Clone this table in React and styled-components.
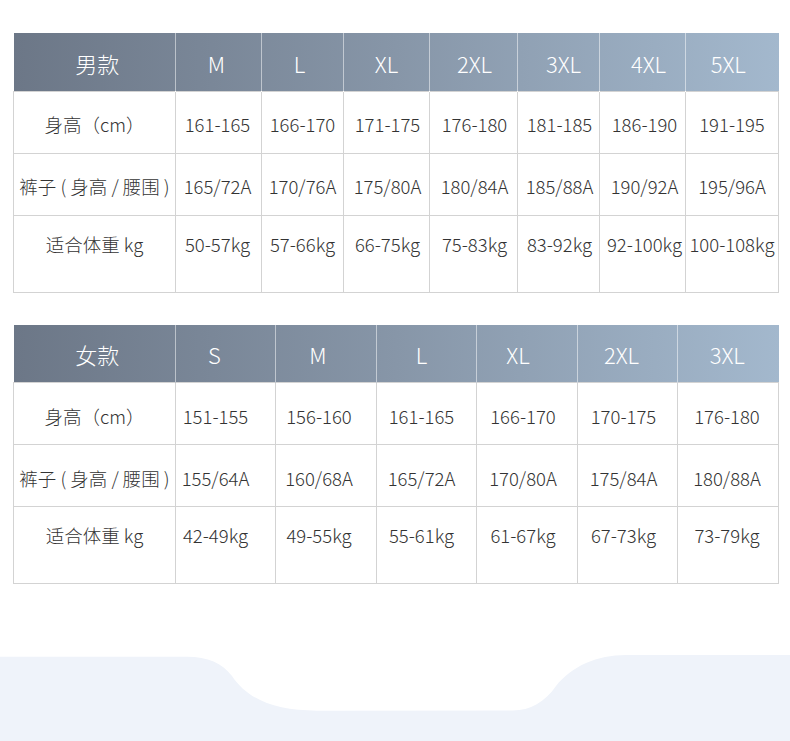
import styled, { createGlobalStyle } from "styled-components";

const GlobalStyle = createGlobalStyle`
  html, body {
    margin: 0;
    padding: 0;
    background: #ffffff;
  }
  body {
    font-family: "Noto Sans CJK SC", "Noto Sans", sans-serif;
  }
`;

const Page = styled.div`
  width: 790px;
  height: 741px;
  display: flex;
  flex-direction: column;
  overflow: hidden;
`;

const Tables = styled.div`
  padding: 33px 13px 0;
  display: flex;
  flex-direction: column;
  gap: 32px;
`;

const Table = styled.table`
  width: 765px;
  border-collapse: collapse;
  table-layout: fixed;
`;

// shifts the centred text a few px sideways, as in the original artwork
const nudge = (shift = 0) =>
  shift >= 0 ? `padding-left: ${shift * 2}px;` : `padding-right: ${-shift * 2}px;`;

const HeadRow = styled.tr`
  height: 58px;
  background: linear-gradient(90deg, #6c7787 0%, #8796a8 50%, #a3b8cd 100%);
`;

const HeadCell = styled.th`
  padding: 2px 0 0;
  font-weight: 300;
  font-size: 22px;
  color: #ffffff;
  text-align: center;
  vertical-align: middle;
  border-left: 1px solid rgba(255, 255, 255, 0.5);
  ${(p) => nudge(p.$shift)}

  &:first-child {
    border-left: none;
  }
`;

const Row = styled.tr`
  height: ${(p) => (p.$tall ? "77px" : "62px")};
`;

const Cell = styled.td`
  padding: ${(p) => (p.$tall ? "15px 0 0" : "4px 0 0")};
  font-size: 18.5px;
  font-weight: 300;
  color: #333333;
  text-align: center;
  vertical-align: ${(p) => (p.$tall ? "top" : "middle")};
  border: 1px solid #d3d3d3;
  white-space: nowrap;
  ${(p) => nudge(p.$shift)}
`;

const Wave = styled.svg`
  display: block;
  margin-top: auto;
  width: 790px;
  height: 91px;
`;

const men = {
  title: "男款",
  widths: [162, 86, 82, 86, 88, 82, 86, 93],
  headShift: [3, -2, -3, 0, 1, 5, 6, -4],
  bodyShift: [0, -1, 0, 1, 1, 1, 2, 0],
  sizes: ["M", "L", "XL", "2XL", "3XL", "4XL", "5XL"],
  height: ["161-165", "166-170", "171-175", "176-180", "181-185", "186-190", "191-195"],
  pants: ["165/72A", "170/76A", "175/80A", "180/84A", "185/88A", "190/92A", "195/96A"],
  weight: ["50-57kg", "57-66kg", "66-75kg", "75-83kg", "83-92kg", "92-100kg", "100-108kg"],
};

const women = {
  title: "女款",
  widths: [162, 100, 101, 100, 101, 100, 101],
  headShift: [3, -11, -8, -5, -9, -6, -1],
  bodyShift: [0, -10, -7, -5, -4, -4, -1],
  sizes: ["S", "M", "L", "XL", "2XL", "3XL"],
  height: ["151-155", "156-160", "161-165", "166-170", "170-175", "176-180"],
  pants: ["155/64A", "160/68A", "165/72A", "170/80A", "175/84A", "180/88A"],
  weight: ["42-49kg", "49-55kg", "55-61kg", "61-67kg", "67-73kg", "73-79kg"],
};

function SizeTable({ data }) {
  const rows = [
    { label: "身高（cm）", values: data.height },
    { label: "裤子\u00a0(\u00a0身高\u00a0/\u00a0腰围\u00a0)", values: data.pants },
    { label: "适合体重 kg", values: data.weight, tall: true },
  ];

  return (
    <Table>
      <colgroup>
        {data.widths.map((w, i) => (
          <col key={i} style={{ width: w }} />
        ))}
      </colgroup>
      <thead>
        <HeadRow>
          <HeadCell $shift={data.headShift[0]}>{data.title}</HeadCell>
          {data.sizes.map((s, i) => (
            <HeadCell key={s} $shift={data.headShift[i + 1]}>
              {s}
            </HeadCell>
          ))}
        </HeadRow>
      </thead>
      <tbody>
        {rows.map((row) => (
          <Row key={row.label} $tall={row.tall}>
            <Cell $tall={row.tall}>{row.label}</Cell>
            {row.values.map((v, i) => (
              <Cell key={i} $tall={row.tall} $shift={data.bodyShift[i + 1]}>
                {v}
              </Cell>
            ))}
          </Row>
        ))}
      </tbody>
    </Table>
  );
}

export default function App() {
  return (
    <>
      <GlobalStyle />
      <Page>
        <Tables>
          <SizeTable data={men} />
          <SizeTable data={women} />
        </Tables>
        <Wave viewBox="0 0 790 91" preserveAspectRatio="none">
          <path
            d="M0 6.7 L187 6.7 C208 6.7 222 13 232 26 C248 50 276 60.7 317 60.7 L513 60.5 C530 60.5 545 52 556 36 C572 16 597 5 626 5 L790 5 L790 91 L0 91 Z"
            fill="#eff3fa"
          />
        </Wave>
      </Page>
    </>
  );
}
